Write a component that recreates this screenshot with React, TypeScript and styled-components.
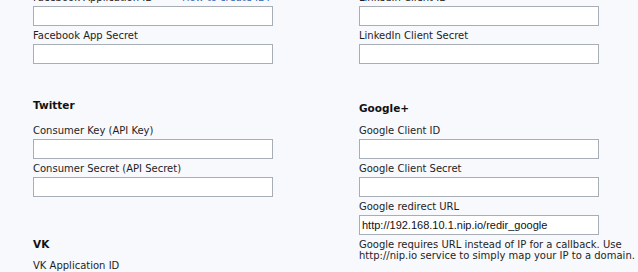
import styled, { createGlobalStyle } from "styled-components";

const GlobalStyle = createGlobalStyle`
  html, body {
    margin: 0;
    padding: 0;
    height: 100%;
    overflow: hidden;
    background: #f8f9fc;
  }
  body {
    font-family: "DejaVu Sans", Tahoma, sans-serif;
    font-size: 10px;
    color: #1e1e1e;
  }
`;

type Field = {
  label: string;
  value?: string;
  link?: string;
};

type Section = {
  title?: string;
  titleGap: number;
  headGap: number;
  fields: Field[];
};

const leftSections: Section[] = [
  {
    titleGap: 0,
    headGap: 0,
    fields: [
      { label: "Facebook Application ID", link: "How to create ID?" },
      { label: "Facebook App Secret" },
    ],
  },
  {
    title: "Twitter",
    titleGap: 31,
    headGap: 12,
    fields: [
      { label: "Consumer Key (API Key)" },
      { label: "Consumer Secret (API Secret)" },
    ],
  },
  {
    title: "VK",
    titleGap: 37,
    headGap: 8,
    fields: [{ label: "VK Application ID" }],
  },
];

const rightSections: Section[] = [
  {
    titleGap: 0,
    headGap: 0,
    fields: [
      { label: "LinkedIn Client ID" },
      { label: "LinkedIn Client Secret" },
    ],
  },
  {
    title: "Google+",
    titleGap: 34,
    headGap: 9,
    fields: [
      { label: "Google Client ID" },
      { label: "Google Client Secret" },
      {
        label: "Google redirect URL",
        value: "http://192.168.10.1.nip.io/redir_google",
      },
    ],
  },
];

function Column({ sections }: { sections: Section[] }) {
  return (
    <ColumnBox>
      {sections.map((section, i) => (
        <SectionBox key={i} $gap={section.titleGap}>
          {section.title && (
            <Heading $gap={section.headGap}>{section.title}</Heading>
          )}
          {section.fields.map(field => (
            <FieldBox key={field.label}>
              <LabelRow>
                <span>{field.label}</span>
                {field.link && <HelpLink href="#">{field.link}</HelpLink>}
              </LabelRow>
              <TextInput type="text" defaultValue={field.value ?? ""} />
            </FieldBox>
          ))}
        </SectionBox>
      ))}
    </ColumnBox>
  );
}

export default function App() {
  return (
    <>
      <GlobalStyle />
      <Page>
        <Column sections={leftSections} />
        <RightArea>
          <Column sections={rightSections} />
          <Note>
            Google requires URL instead of IP for a callback. Use
            <br />
            http://nip.io service to simply map your IP to a domain.
          </Note>
        </RightArea>
      </Page>
    </>
  );
}

const Page = styled.div`
  display: grid;
  grid-template-columns: 240px 240px;
  column-gap: 86px;
  padding-left: 33px;
  margin-top: -9px;
`;

const ColumnBox = styled.div`
  display: flex;
  flex-direction: column;
`;

const RightArea = styled.div`
  display: flex;
  flex-direction: column;
`;

const SectionBox = styled.section<{ $gap: number }>`
  display: flex;
  flex-direction: column;
  margin-top: ${p => p.$gap}px;
`;

const Heading = styled.h3<{ $gap: number }>`
  margin: 0 0 ${p => p.$gap}px;
  font-size: 10.5px;
  font-weight: bold;
  line-height: 14px;
  color: #111;
`;

const FieldBox = styled.div`
  display: flex;
  flex-direction: column;
  margin-bottom: 3px;
`;

const LabelRow = styled.label`
  display: flex;
  justify-content: space-between;
  line-height: 14px;
  height: 14px;
  white-space: nowrap;
`;

const HelpLink = styled.a`
  color: #3b6ab5;
  text-decoration: none;
  margin-right: 2px;
`;

const TextInput = styled.input`
  box-sizing: border-box;
  width: 240px;
  height: 20px;
  margin: 1px 0 0;
  padding: 0 2px;
  border: 1px solid #a7aeb6;
  border-radius: 0;
  background: #fff;
  font-family: "Liberation Sans", Arial, sans-serif;
  font-size: 11px;
  line-height: 18px;
  color: #111;
  outline: none;
`;

const Note = styled.p`
  margin: 1px 0 0;
  line-height: 11px;
  white-space: nowrap;
  color: #1e1e1e;
`;
